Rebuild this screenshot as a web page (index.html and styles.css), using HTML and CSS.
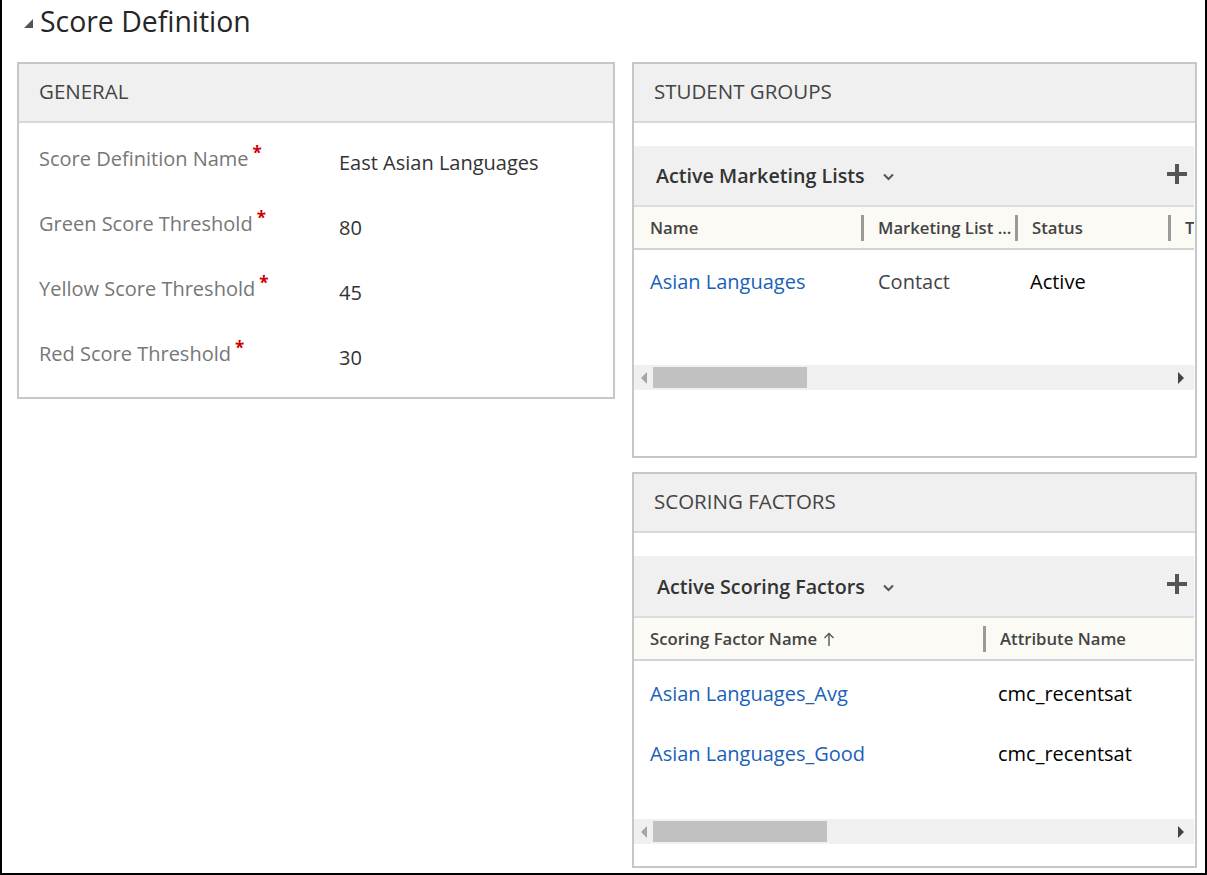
FILE: index.html
```html
<!DOCTYPE html>
<html>
<head>
<meta charset="utf-8">
<link rel="stylesheet" href="styles.css">
</head>
<body>
<div class="frame">
  <div class="title-row">
    <svg class="collapse" width="9" height="9" viewBox="0 0 9 9"><polygon points="9,0 9,9 0,9" fill="#555"/></svg>
    <span class="title">Score Definition</span>
  </div>
  <div class="columns">
    <div class="col-left">
      <section class="box box-general">
        <div class="box-head">GENERAL</div>
        <div class="fields">
          <div class="field">
            <div class="label">Score Definition Name<span class="req">*</span></div>
            <div class="value">East Asian Languages</div>
          </div>
          <div class="field">
            <div class="label">Green Score Threshold<span class="req">*</span></div>
            <div class="value">80</div>
          </div>
          <div class="field">
            <div class="label">Yellow Score Threshold<span class="req">*</span></div>
            <div class="value">45</div>
          </div>
          <div class="field">
            <div class="label">Red Score Threshold<span class="req">*</span></div>
            <div class="value">30</div>
          </div>
        </div>
      </section>
    </div>
    <div class="col-right">
      <section class="box box-groups">
        <div class="box-head">STUDENT GROUPS</div>
        <div class="grid">
          <div class="sub-head">
            <span class="sub-title">Active Marketing Lists</span>
            <svg class="chev" width="11" height="8" viewBox="0 0 11 8"><polyline points="1,1.5 5.5,6 10,1.5" fill="none" stroke="#555" stroke-width="2"/></svg>
            <svg class="plus" width="20" height="20" viewBox="0 0 20 20"><rect x="8" y="0" width="4" height="20" fill="#555"/><rect x="0" y="8" width="20" height="4" fill="#555"/></svg>
          </div>
          <div class="thead">
            <div class="th c1">Name</div>
            <div class="th c2 sep">Marketing List ...</div>
            <div class="th c3 sep">Status</div>
            <div class="th c4 sep">Type</div>
          </div>
          <div class="rows rows-groups">
            <div class="tr">
              <div class="td c1 link">Asian Languages</div>
              <div class="td c2 grey">Contact</div>
              <div class="td c3 black st">Active</div>
            </div>
          </div>
          <div class="hscroll">
            <svg class="arr" width="6" height="12" viewBox="0 0 6 12"><polygon points="6,0 6,12 0,6" fill="#a6a6a6"/></svg>
            <div class="thumb thumb-groups"></div>
            <div class="track-fill"></div>
            <svg class="arr" width="6" height="12" viewBox="0 0 6 12"><polygon points="0,0 0,12 6,6" fill="#444"/></svg>
          </div>
        </div>
      </section>
      <section class="box box-factors">
        <div class="box-head">SCORING FACTORS</div>
        <div class="grid">
          <div class="sub-head sub-head-factors">
            <span class="sub-title">Active Scoring Factors</span>
            <svg class="chev" width="11" height="8" viewBox="0 0 11 8"><polyline points="1,1.5 5.5,6 10,1.5" fill="none" stroke="#555" stroke-width="2"/></svg>
            <svg class="plus" width="20" height="20" viewBox="0 0 20 20"><rect x="8" y="0" width="4" height="20" fill="#555"/><rect x="0" y="8" width="20" height="4" fill="#555"/></svg>
          </div>
          <div class="thead">
            <div class="th f1">Scoring Factor Name
              <svg class="sort" width="12" height="14" viewBox="0 0 12 14"><polyline points="1.5,6 6,1.5 10.5,6" fill="none" stroke="#555" stroke-width="1.4"/><line x1="6" y1="1.5" x2="6" y2="14" stroke="#555" stroke-width="1.4"/></svg>
            </div>
            <div class="th f2 sep">Attribute Name</div>
          </div>
          <div class="rows rows-factors">
            <div class="tr">
              <div class="td f1 link">Asian Languages_Avg</div>
              <div class="td f2 black">cmc_recentsat</div>
            </div>
            <div class="tr">
              <div class="td f1 link">Asian Languages_Good</div>
              <div class="td f2 black">cmc_recentsat</div>
            </div>
          </div>
          <div class="hscroll">
            <svg class="arr" width="6" height="12" viewBox="0 0 6 12"><polygon points="6,0 6,12 0,6" fill="#a6a6a6"/></svg>
            <div class="thumb thumb-factors"></div>
            <div class="track-fill"></div>
            <svg class="arr" width="6" height="12" viewBox="0 0 6 12"><polygon points="0,0 0,12 6,6" fill="#444"/></svg>
          </div>
        </div>
      </section>
    </div>
  </div>
</div>
</body>
</html>
```
FILE: styles.css
```css
* { box-sizing: border-box; }
html, body { margin: 0; padding: 0; background: #fff; }
body { font-family: "Open Sans", "Noto Sans", sans-serif; color: #333; }

.frame {
  width: 1207px;
  height: 875px;
  border-left: 2px solid #000;
  border-right: 2px solid #000;
  border-bottom: 2px solid #000;
  overflow: hidden;
}

.title-row {
  height: 62px;
  display: flex;
  align-items: flex-start;
  padding-left: 22px;
  padding-top: 3px;
}
.collapse { margin-top: 16px; margin-right: 7px; }
.title { font-size: 28.4px; line-height: 36px; color: #262626; font-weight: 400; }

.columns {
  display: flex;
  gap: 17px;
  padding-left: 15px;
}
.col-left { width: 598px; }
.col-right { width: 565px; display: flex; flex-direction: column; gap: 14px; }

.box {
  border: 2px solid #c5c8cb;
  background: #fff;
}
.box-head {
  height: 59px;
  background: #f0f0f0;
  border-bottom: 2px solid #d5d7d9;
  font-size: 20.5px;
  color: #444;
  display: flex;
  align-items: center;
  padding-left: 20px;
  padding-bottom: 3px;
}
.box-general { height: 337px; }
.box-groups { height: 396px; }
.box-factors { height: 396px; }

.fields { padding-top: 5px; }
.field { height: 65px; display: flex; }
.label {
  width: 320px;
  flex: none;
  padding-left: 20px;
  font-size: 20px;
  color: #777;
  line-height: 26px;
  padding-top: 18px;
  white-space: nowrap;
}
.req { color: #c00; font-size: 17px; font-weight: 700; margin-left: 4px; position: relative; top: -7px; }
.value { font-size: 20px; color: #333; line-height: 26px; padding-top: 22px; }

.grid { margin-top: 23px; margin-right: 1px; overflow: hidden; }
.sub-head {
  height: 59px;
  background: #f0f0f0;
  display: flex;
  align-items: center;
  padding-left: 22px;
  padding-right: 7px;
}
.sub-head-factors { height: 60px; padding-left: 23px; }
.sub-title { font-size: 19.7px; font-weight: 600; color: #333; }
.chev { margin-left: 18px; margin-top: 3px; }
.plus { margin-left: auto; margin-top: -4px; }

.thead {
  height: 45px;
  background: #fbfaf5;
  border-top: 2px solid #dcdcdc;
  border-bottom: 2px solid #d3d3d3;
  display: flex;
  align-items: center;
  white-space: nowrap;
}
.th { font-size: 16.7px; font-weight: 600; color: #444; display: flex; align-items: center; height: 100%; }
.th.sep::before {
  content: "";
  width: 3px;
  height: 26px;
  background: #9a9a9a;
  margin-right: 14px;
  flex: none;
}
.c1 { width: 227px; padding-left: 16px; flex: none; }
.c2 { width: 154px; flex: none; }
.c3 { width: 153px; flex: none; }
.c4 { width: 60px; flex: none; }
.f1 { width: 349px; padding-left: 16px; flex: none; }
.f2 { width: 200px; flex: none; }
.sort { margin-left: 6px; }

.rows-groups { height: 115px; }
.rows-factors { height: 158px; }
.tr { display: flex; white-space: nowrap; }
.rows-groups .tr { height: 64px; padding-top: 19px; }
.rows-factors .tr { height: 60px; padding-top: 20px; }
.td { font-size: 20px; line-height: 26px; }
.td.c2 { padding-left: 17px; }
.td.c3 { padding-left: 15px; }
.td.f2 { padding-left: 15px; }
.link { color: #1a62b8; }
.grey { color: #444; }
.black { color: #000; }

.hscroll {
  height: 25px;
  background: #f0f0f0;
  display: flex;
  align-items: center;
  padding-left: 7px;
  padding-right: 10px;
}
.thumb { height: 21px; background: #c1c1c1; margin-left: 6px; }
.thumb-groups { width: 154px; }
.thumb-factors { width: 174px; }
.track-fill { flex: 1; }
```
